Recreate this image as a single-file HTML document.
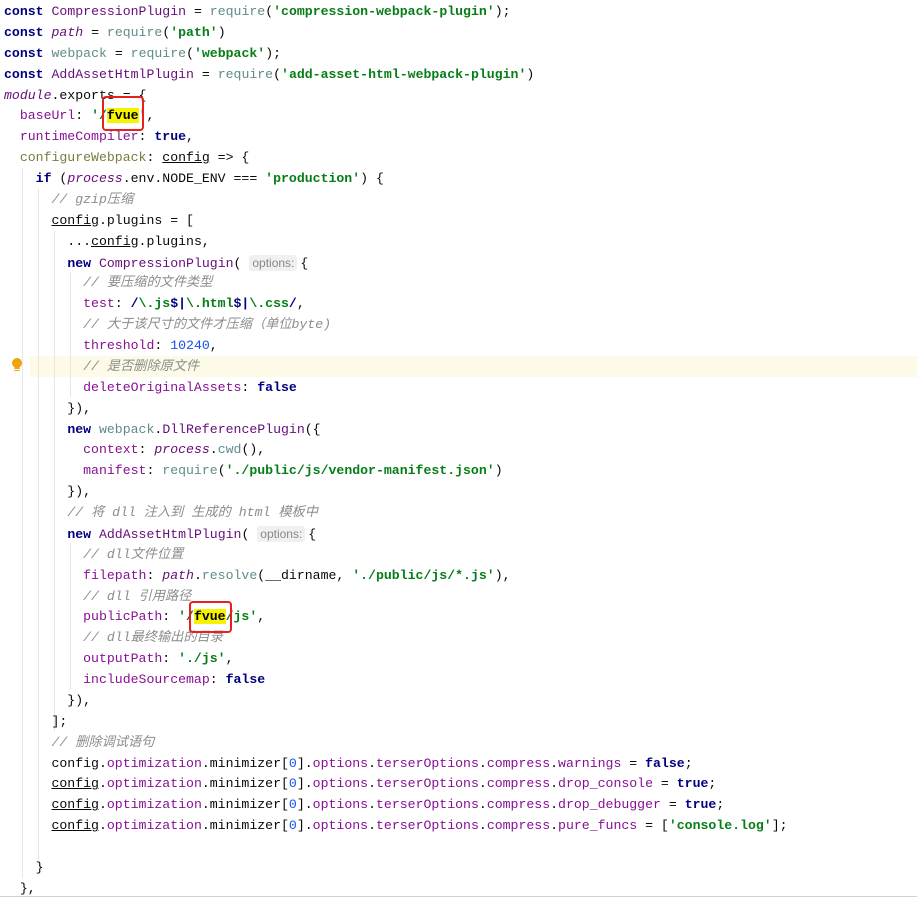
<!DOCTYPE html>
<html><head><meta charset="utf-8"><style>
html,body{margin:0;padding:0;background:#fff;width:917px;height:899px;overflow:hidden;position:relative}
.code{position:absolute;left:4px;top:2px;font-family:"Liberation Mono","Noto Sans CJK SC",monospace;font-size:13.2px;line-height:20.88px;color:#080808}
.l{height:20.88px;position:relative;white-space:pre}
.k{color:#000080;font-weight:bold}
.s{color:#067d17;font-weight:bold}
.p{color:#871094}
.n{color:#1750eb}
.c{color:#8c8c8c;font-style:italic}
.f{color:#5f8c8a}
.cl{color:#660e7a}
.i{font-style:italic;color:#660e7a}
.u{text-decoration:underline}
.hint{font-family:"Liberation Sans",sans-serif;font-size:12px;color:#888;background:#f0f0f0;border-radius:3px;padding:1px 3px;margin-right:3px}
.hl{background:#f7f300}
.hlline{position:absolute;left:30px;right:0;top:356px;height:21px;background:#fdfbe8}
.guide{position:absolute;width:1px;background:#e6e6e6}
.box{position:absolute;border:2px solid #e8201b;border-radius:4px}
</style></head><body>
<div class="hlline"></div>
<div class="guide" style="left:22px;top:168px;height:710px"></div>
<div class="guide" style="left:38px;top:189px;height:670px"></div>
<div class="guide" style="left:54px;top:231px;height:500px"></div>
<div class="guide" style="left:70px;top:272px;height:125px"></div>
<div class="guide" style="left:70px;top:543px;height:146px"></div>
<svg style="position:absolute;left:11px;top:357px" width="12" height="16" viewBox="0 0 12 16"><circle cx="6" cy="6" r="5" fill="#f0a30a"/><rect x="3.5" y="10" width="5" height="4" fill="#f0a30a"/><rect x="4" y="12" width="4" height="1" fill="#fff"/></svg>
<div class="code"><div class="l"><span class="k">const</span> <span class="cl">CompressionPlugin</span> = <span class="f">require</span>(<span class="s">'compression-webpack-plugin'</span>);</div><div class="l"><span class="k">const</span> <span class="i">path</span> = <span class="f">require</span>(<span class="s">'path'</span>)</div><div class="l"><span class="k">const</span> <span class="f">webpack</span> = <span class="f">require</span>(<span class="s">'webpack'</span>);</div><div class="l"><span class="k">const</span> <span class="cl">AddAssetHtmlPlugin</span> = <span class="f">require</span>(<span class="s">'add-asset-html-webpack-plugin'</span>)</div><div class="l"><span class="i">module</span>.exports = {</div><div class="l">  <span class="p">baseUrl</span>: <span class="s">'/<span class="hl" style="color:#000">fvue</span>'</span>,</div><div class="l">  <span class="p">runtimeCompiler</span>: <span class="k">true</span>,</div><div class="l">  <span style="color:#7a7a43">configureWebpack</span>: <span class="u">config</span> =&gt; {</div><div class="l">    <span class="k">if</span> (<span class="i">process</span>.env.NODE_ENV === <span class="s">'production'</span>) {</div><div class="l">      <span class="c">// gzip压缩</span></div><div class="l">      <span class="u">config</span>.plugins = [</div><div class="l">        ...<span class="u">config</span>.plugins,</div><div class="l">        <span class="k">new</span> <span class="cl">CompressionPlugin</span>( <span class="hint">options:</span>{</div><div class="l">          <span class="c">// 要压缩的文件类型</span></div><div class="l">          <span class="p">test</span>: <span class="k">/</span><span class="s">\.js</span><span class="k">$|</span><span class="s">\.html</span><span class="k">$|</span><span class="s">\.css</span><span class="k">/</span>,</div><div class="l">          <span class="c">// 大于该尺寸的文件才压缩（单位byte)</span></div><div class="l">          <span class="p">threshold</span>: <span class="n">10240</span>,</div><div class="l">          <span class="c">// 是否删除原文件</span></div><div class="l">          <span class="p">deleteOriginalAssets</span>: <span class="k">false</span></div><div class="l">        }),</div><div class="l">        <span class="k">new</span> <span class="f">webpack</span>.<span class="cl">DllReferencePlugin</span>({</div><div class="l">          <span class="p">context</span>: <span class="i">process</span>.<span class="f">cwd</span>(),</div><div class="l">          <span class="p">manifest</span>: <span class="f">require</span>(<span class="s">'./public/js/vendor-manifest.json'</span>)</div><div class="l">        }),</div><div class="l">        <span class="c">// 将 dll 注入到 生成的 html 模板中</span></div><div class="l">        <span class="k">new</span> <span class="cl">AddAssetHtmlPlugin</span>( <span class="hint">options:</span>{</div><div class="l">          <span class="c">// dll文件位置</span></div><div class="l">          <span class="p">filepath</span>: <span class="i">path</span>.<span class="f">resolve</span>(__dirname, <span class="s">'./public/js/*.js'</span>),</div><div class="l">          <span class="c">// dll 引用路径</span></div><div class="l">          <span class="p">publicPath</span>: <span class="s">'/<span class="hl" style="color:#000">fvue</span>/js'</span>,</div><div class="l">          <span class="c">// dll最终输出的目录</span></div><div class="l">          <span class="p">outputPath</span>: <span class="s">'./js'</span>,</div><div class="l">          <span class="p">includeSourcemap</span>: <span class="k">false</span></div><div class="l">        }),</div><div class="l">      ];</div><div class="l">      <span class="c">// 删除调试语句</span></div><div class="l">      config.<span class="p">optimization</span>.minimizer[<span class="n">0</span>].<span class="p">options</span>.<span class="p">terserOptions</span>.<span class="p">compress</span>.<span class="p">warnings</span> = <span class="k">false</span>;</div><div class="l">      <span class="u">config</span>.<span class="p">optimization</span>.minimizer[<span class="n">0</span>].<span class="p">options</span>.<span class="p">terserOptions</span>.<span class="p">compress</span>.<span class="p">drop_console</span> = <span class="k">true</span>;</div><div class="l">      <span class="u">config</span>.<span class="p">optimization</span>.minimizer[<span class="n">0</span>].<span class="p">options</span>.<span class="p">terserOptions</span>.<span class="p">compress</span>.<span class="p">drop_debugger</span> = <span class="k">true</span>;</div><div class="l">      <span class="u">config</span>.<span class="p">optimization</span>.minimizer[<span class="n">0</span>].<span class="p">options</span>.<span class="p">terserOptions</span>.<span class="p">compress</span>.<span class="p">pure_funcs</span> = [<span class="s">'console.log'</span>];</div><div class="l"> </div><div class="l">    }</div><div class="l">  },</div></div>
<div class="box" style="left:102px;top:96px;width:38px;height:31px"></div>
<div class="box" style="left:189px;top:601px;width:39px;height:28px"></div>
<div style="position:absolute;left:0;right:0;top:896px;height:1px;background:#d0d0d0"></div>
</body></html>
